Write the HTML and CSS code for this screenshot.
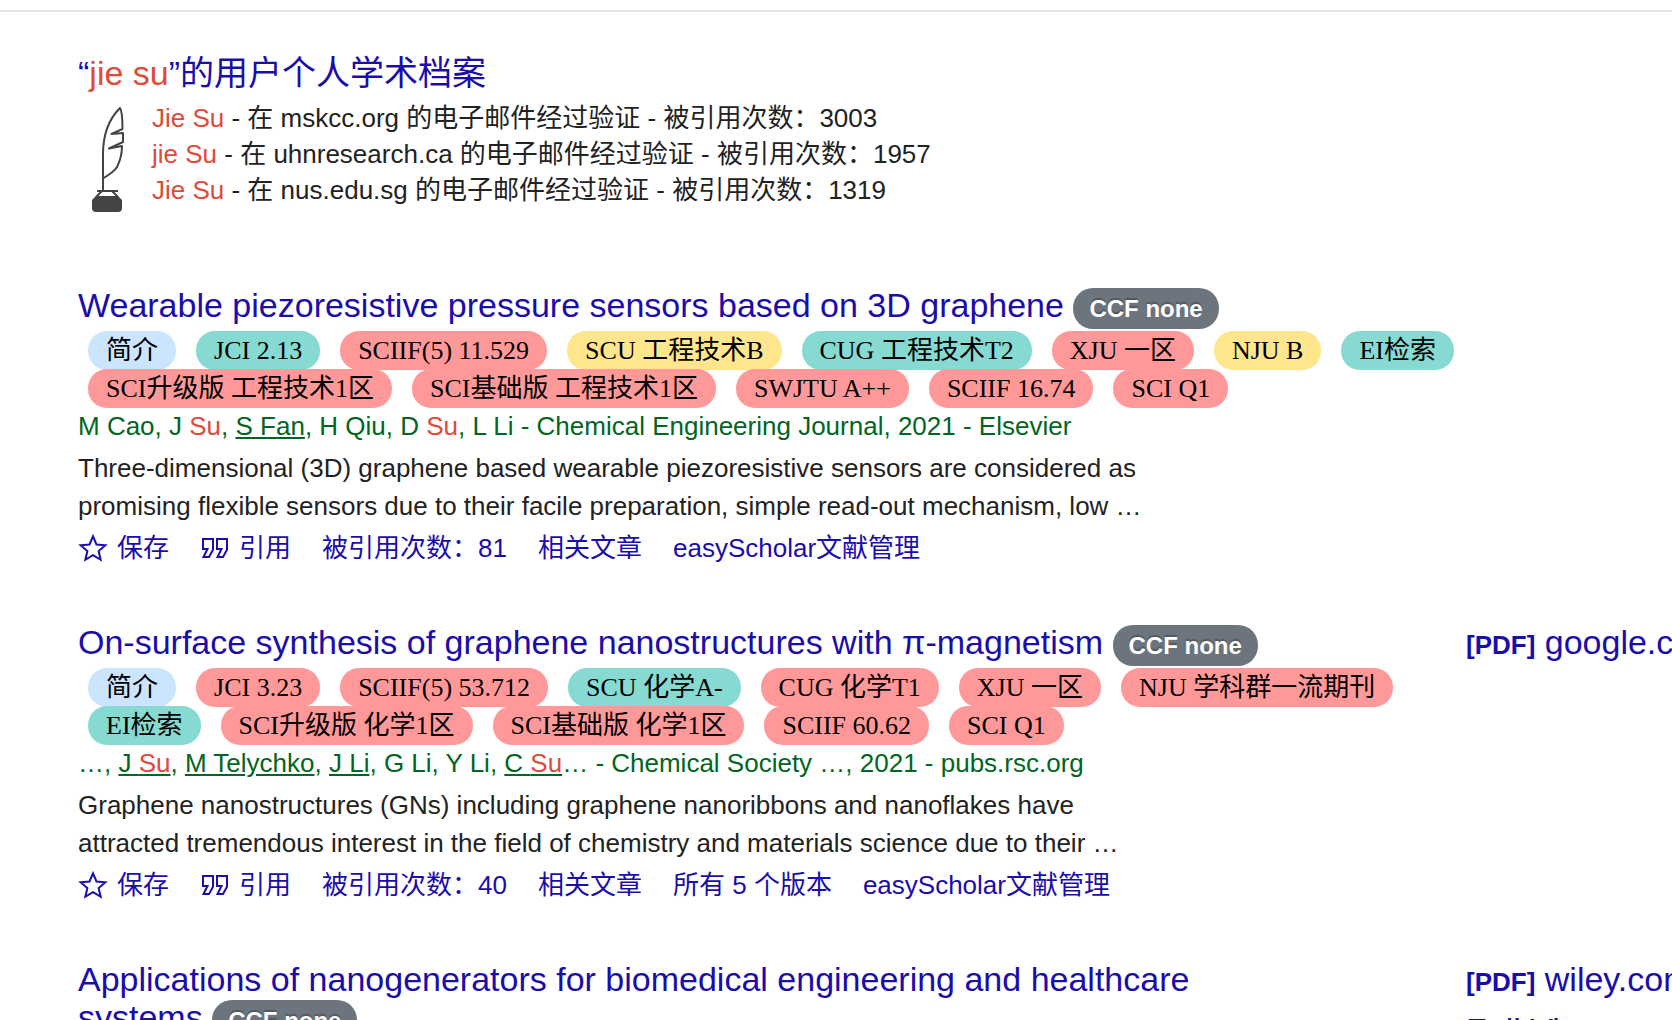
FILE: index.html
```
<!DOCTYPE html>
<html lang="zh-CN">
<head>
<meta charset="utf-8">
<meta name="viewport" content="width=device-width, initial-scale=1">
<title>jie su - 学术搜索</title>
<link rel="stylesheet" href="styles.css">
</head>
<body>
<svg class="symbols" aria-hidden="true">
  <symbol id="star" viewBox="0 0 15 16"><path d="M7.5 11.57l3.824 2.308-1.015-4.35 3.379-2.926-4.45-.378L7.5 2.122 5.761 6.224l-4.45.378L4.69 9.528l-1.015 4.35z"/></symbol>
  <symbol id="quote" viewBox="0 0 15 16"><path d="M6.500 3.500h-5v5h2.250l-2 4h2.750l2-3.625zM13.500 3.500h-5v5h2.250l-2 4h2.750l2-3.625z"/></symbol>
</svg>
<main class="page">
  <section class="profiles">
    <h3 class="title"><a href="#profiles">“<b class="hit">jie su</b>”的用户个人学术档案</a></h3>
    <div class="profiles-body">
      <svg class="quill" viewBox="0 0 32 107" aria-hidden="true">
        <path class="quill-line" d="M11 85V48C11 30 16 14 28 2c2 3 2.500 7 2.500 21l-11 5 11.500-1v9l-14 6.500 13-2.500c0 8-2 15-5 21-3 5-8 8-15 12"/>
        <path class="quill-line" d="M5 85h21M10 85l-6 6M20 85l6 6"/>
        <path class="quill-pot" d="M4 90h22l4 4v8q0 4-4 4H4q-4 0-4-4v-8z"/>
      </svg>
      <ul class="people">
        <li><a class="hit" href="#p1">Jie Su</a> - 在 mskcc.org 的电子邮件经过验证 - 被引用次数：3003</li>
        <li><a class="hit" href="#p2">jie Su</a> - 在 uhnresearch.ca 的电子邮件经过验证 - 被引用次数：1957</li>
        <li><a class="hit" href="#p3">Jie Su</a> - 在 nus.edu.sg 的电子邮件经过验证 - 被引用次数：1319</li>
      </ul>
    </div>
  </section>

  <article class="result">
    <div class="entry">
      <h3 class="title"><a href="#r1">Wearable piezoresistive pressure sensors based on 3D graphene</a> <span class="ccf">CCF none</span></h3>
      <ul class="tags">
        <li class="tag blue">简介</li>
        <li class="tag teal">JCI 2.13</li>
        <li class="tag red">SCIIF(5) 11.529</li>
        <li class="tag yellow">SCU 工程技术B</li>
        <li class="tag teal">CUG 工程技术T2</li>
        <li class="tag red">XJU 一区</li>
        <li class="tag yellow">NJU B</li>
        <li class="tag teal">EI检索</li>
        <li class="tag red">SCI升级版 工程技术1区</li>
        <li class="tag red">SCI基础版 工程技术1区</li>
        <li class="tag red">SWJTU A++</li>
        <li class="tag red">SCIIF 16.74</li>
        <li class="tag red">SCI Q1</li>
      </ul>
      <p class="authors">M Cao, J <b class="hit">Su</b>, <a href="#sfan">S Fan</a>, H Qiu, D <b class="hit">Su</b>, L Li - Chemical Engineering Journal, 2021 - Elsevier</p>
      <p class="abstract">Three-dimensional (3D) graphene based wearable piezoresistive sensors are considered as<br>promising flexible sensors due to their facile preparation, simple read-out mechanism, low …</p>
      <div class="actions">
        <button type="button"><svg class="icon" aria-hidden="true"><use href="#star"/></svg>保存</button>
        <button type="button"><svg class="icon" aria-hidden="true"><use href="#quote"/></svg>引用</button>
        <a href="#cited1">被引用次数：81</a>
        <a href="#related1">相关文章</a>
        <a href="#easy1">easyScholar文献管理</a>
      </div>
    </div>
  </article>

  <article class="result">
    <div class="entry">
      <h3 class="title"><a href="#r2">On-surface synthesis of graphene nanostructures with π-magnetism</a> <span class="ccf">CCF none</span></h3>
      <ul class="tags">
        <li class="tag blue">简介</li>
        <li class="tag red">JCI 3.23</li>
        <li class="tag red">SCIIF(5) 53.712</li>
        <li class="tag teal">SCU 化学A-</li>
        <li class="tag red">CUG 化学T1</li>
        <li class="tag red">XJU 一区</li>
        <li class="tag red">NJU 学科群一流期刊</li>
        <li class="tag teal">EI检索</li>
        <li class="tag red">SCI升级版 化学1区</li>
        <li class="tag red">SCI基础版 化学1区</li>
        <li class="tag red">SCIIF 60.62</li>
        <li class="tag red">SCI Q1</li>
      </ul>
      <p class="authors">…, <a href="#jsu">J <b class="hit">Su</b></a>, <a href="#mt">M Telychko</a>, <a href="#jli">J Li</a>, G Li, Y Li, <a href="#csu">C <b class="hit">Su</b></a>… - Chemical Society …, 2021 - pubs.rsc.org</p>
      <p class="abstract">Graphene nanostructures (GNs) including graphene nanoribbons and nanoflakes have<br>attracted tremendous interest in the field of chemistry and materials science due to their …</p>
      <div class="actions">
        <button type="button"><svg class="icon" aria-hidden="true"><use href="#star"/></svg>保存</button>
        <button type="button"><svg class="icon" aria-hidden="true"><use href="#quote"/></svg>引用</button>
        <a href="#cited2">被引用次数：40</a>
        <a href="#related2">相关文章</a>
        <a href="#versions2">所有 5 个版本</a>
        <a href="#easy2">easyScholar文献管理</a>
      </div>
    </div>
    <div class="fulltext"><a href="#pdf2"><span class="kind">[PDF]</span> google.com</a></div>
  </article>

  <article class="result">
    <div class="entry">
      <h3 class="title"><a href="#r3">Applications of nanogenerators for biomedical engineering and healthcare systems</a> <span class="ccf">CCF none</span></h3>
    </div>
    <div class="fulltext"><a href="#pdf3"><span class="kind">[PDF]</span> wiley.com</a><a href="#full3">Full View</a></div>
  </article>
</main>
</body>
</html>
```
FILE: styles.css
```
* { box-sizing: border-box; }

html { overflow: hidden; }

body {
  margin: 0;
  height: 100vh;
  overflow: hidden;
  background: #fff;
  color: #222;
  font-family: "Liberation Sans", Arial, "Noto Sans CJK SC", sans-serif;
  font-size: 26px;
}

a { color: #1a0dab; text-decoration: none; }
ul { margin: 0; padding: 0; list-style: none; }
p { margin: 0; }

.symbols { display: none; }

.page {
  margin-top: 10px;
  padding: 42px 0 0 78px;
  border-top: 2px solid #e5e5e5;
}

.title {
  max-width: 1200px;
  margin: 0;
  font-size: 34px;
  font-weight: 400;
  line-height: 38px;
}

.hit, a.hit { color: #dd4b39; font-weight: 400; }

.profiles { margin-bottom: 73px; }

.profiles-body {
  display: flex;
  gap: 28px;
  padding: 8px 0 0 14px;
}

.quill { flex: none; width: 32px; height: 107px; margin-top: 6px; }
.quill-line { fill: none; stroke: #444; stroke-width: 2; stroke-linejoin: round; }
.quill-pot { fill: #444; }

.people { line-height: 36px; white-space: nowrap; }

.result { display: flex; margin-bottom: 55px; }
.entry { flex: 0 0 1388px; }

.ccf {
  display: inline-block;
  padding: 0 16px;
  border-radius: 20px;
  background: #6c757d;
  color: #fff;
  font-size: 24px;
  font-weight: 700;
  line-height: 41px;
  text-shadow: 0 -2px 1px rgba(0, 0, 0, 0.25);
  margin: -4px 0;
}

.tags {
  display: flex;
  flex-wrap: wrap;
  gap: 0 20px;
  padding: 6px 0 0 10px;
  color: #000;
  font-family: "Liberation Serif", "Times New Roman", "Noto Sans CJK SC", serif;
}

.tag {
  height: 39px;
  margin-bottom: -1px;
  padding: 0 18px;
  border-radius: 19px;
  line-height: 39px;
  white-space: nowrap;
}

.blue { background: #cce5ff; }
.teal { background: #86dad1; }
.red { background: #ff9999; }
.yellow { background: #ffe68c; }

.authors { color: #006621; line-height: 38px; }
.authors a { color: #006621; text-decoration: underline; }

.abstract { padding-top: 4px; line-height: 38px; }

.actions {
  display: flex;
  align-items: center;
  gap: 31px;
  padding-top: 4px;
  line-height: 38px;
}

.actions button {
  display: flex;
  align-items: center;
  gap: 9px;
  padding: 0;
  border: 0;
  background: none;
  color: #1a0dab;
  font: inherit;
  line-height: 38px;
}

.icon { width: 30px; height: 32px; fill: none; stroke: #1a0dab; stroke-width: 1; }

.actions { padding-bottom: 1px; }

.fulltext {
  display: flex;
  flex-direction: column;
  gap: 10px;
  flex: 1;
  min-width: 0;
  font-size: 34px;
  line-height: 38px;
  white-space: nowrap;
}

.kind { font-size: 26px; font-weight: 700; }
```
